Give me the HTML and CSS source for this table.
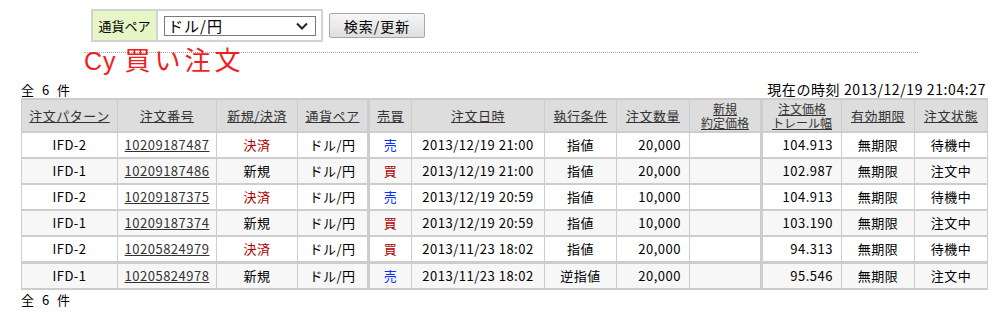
FILE: index.html
```html
<!DOCTYPE html>
<html lang="ja">
<head>
<meta charset="utf-8">
<title>Cy 買い注文</title>
<link rel="stylesheet" href="styles.css">
</head>
<body>
<div class="page">
  <div class="search">
    <div class="pairbox">
      <div class="pairlabel">通貨ペア</div>
      <div class="paircell">
        <div class="select"><span>ドル/円</span>
          <svg class="chev" width="12" height="8" viewBox="0 0 12 8"><path d="M1 1.5 L6 6.5 L11 1.5" fill="none" stroke="#222" stroke-width="2"/></svg>
        </div>
      </div>
    </div>
    <button class="btn" type="button">検索/更新</button>
  </div>
  <div class="rule"></div>
  <h1 class="title">Cy <span class="jp">買い注文</span></h1>
  <div class="info">
    <span class="count">全 6 件</span>
    <span class="now">現在の時刻 2013/12/19 21:04:27</span>
  </div>
  <table class="orders">
    <colgroup>
      <col class="c1"><col class="c2"><col class="c3"><col class="c4"><col class="c5"><col class="c6">
      <col class="c7"><col class="c8"><col class="c9"><col class="c10"><col class="c11"><col class="c12">
    </colgroup>
    <thead>
      <tr>
        <th><a>注文パターン</a></th>
        <th><a>注文番号</a></th>
        <th><a>新規/決済</a></th>
        <th><a>通貨ペア</a></th>
        <th class="sep"><a>売買</a></th>
        <th><a>注文日時</a></th>
        <th><a>執行条件</a></th>
        <th><a>注文数量</a></th>
        <th class="two"><a>新規<br>約定価格</a></th>
        <th class="sep two"><a>注文価格<br>トレール幅</a></th>
        <th><a>有効期限</a></th>
        <th><a>注文状態</a></th>
      </tr>
    </thead>
    <tbody>
      <tr>
        <td>IFD-2</td><td><a>10209187487</a></td><td class="settle">決済</td><td>ドル/円</td><td class="sep sell">売</td>
        <td>2013/12/19 21:00</td><td>指値</td><td class="num">20,000</td><td></td><td class="sep num">104.913</td><td>無期限</td><td>待機中</td>
      </tr>
      <tr class="alt">
        <td>IFD-1</td><td><a>10209187486</a></td><td>新規</td><td>ドル/円</td><td class="sep buy">買</td>
        <td>2013/12/19 21:00</td><td>指値</td><td class="num">20,000</td><td></td><td class="sep num">102.987</td><td>無期限</td><td>注文中</td>
      </tr>
      <tr>
        <td>IFD-2</td><td><a>10209187375</a></td><td class="settle">決済</td><td>ドル/円</td><td class="sep sell">売</td>
        <td>2013/12/19 20:59</td><td>指値</td><td class="num">10,000</td><td></td><td class="sep num">104.913</td><td>無期限</td><td>待機中</td>
      </tr>
      <tr class="alt">
        <td>IFD-1</td><td><a>10209187374</a></td><td>新規</td><td>ドル/円</td><td class="sep buy">買</td>
        <td>2013/12/19 20:59</td><td>指値</td><td class="num">10,000</td><td></td><td class="sep num">103.190</td><td>無期限</td><td>注文中</td>
      </tr>
      <tr>
        <td>IFD-2</td><td><a>10205824979</a></td><td class="settle">決済</td><td>ドル/円</td><td class="sep buy">買</td>
        <td>2013/11/23 18:02</td><td>指値</td><td class="num">20,000</td><td></td><td class="sep num">94.313</td><td>無期限</td><td>待機中</td>
      </tr>
      <tr class="alt group">
        <td>IFD-1</td><td><a>10205824978</a></td><td>新規</td><td>ドル/円</td><td class="sep sell">売</td>
        <td>2013/11/23 18:02</td><td>逆指値</td><td class="num">20,000</td><td></td><td class="sep num">95.546</td><td>無期限</td><td>注文中</td>
      </tr>
    </tbody>
  </table>
  <div class="foot count">全 6 件</div>
</div>
</body>
</html>
```

FILE: styles.css
```css
html, body {
  margin: 0;
  padding: 0;
  background: #ffffff;
}
body {
  font-family: "Noto Sans CJK JP", "Liberation Sans", sans-serif;
  font-size: 13px;
  letter-spacing: 0.5px;
  color: #000;
}
.page {
  width: 967px;
  padding: 9px 0 0 21px;
}
.search {
  display: flex;
  align-items: center;
  margin-left: 70px;
}
.pairbox {
  display: flex;
  border: 2px solid #d2d2d2;
  height: 29px;
}
.pairlabel {
  width: 63px;
  background: #e6f6c6;
  border-right: 2px solid #d2d2d2;
  display: flex;
  align-items: center;
  justify-content: center;
  font-size: 13px;
  line-height: 16px;
  letter-spacing: 0;
}
.paircell {
  width: 163px;
  display: flex;
  align-items: center;
  padding-left: 6px;
  box-sizing: border-box;
}
.select {
  width: 152px;
  height: 20px;
  box-sizing: border-box;
  border: 1px solid #7a7a7a;
  display: flex;
  align-items: center;
  justify-content: space-between;
  padding: 0 7px 0 3px;
  font-size: 15px;
  line-height: 18px;
  letter-spacing: 1px;
}
.chev {
  display: block;
}
.btn {
  margin-left: 6px;
  width: 96px;
  height: 25px;
  box-sizing: border-box;
  border: 1px solid #a8a8a8;
  border-radius: 2px;
  background: linear-gradient(#f6f6f6, #dedede);
  font-family: "Noto Sans CJK JP", sans-serif;
  font-size: 14px;
  letter-spacing: 1px;
  line-height: 18px;
  padding: 0;
  color: #000;
}
.rule {
  margin: 10px 0 0 63px;
  width: 834px;
  border-top: 1px dotted #a8a8a8;
}
.title {
  margin: -6px 0 0 63px;
  height: 24px;
  overflow: visible;
  font-family: "Liberation Sans", "Noto Sans CJK JP", sans-serif;
  font-weight: normal;
  font-size: 25px;
  line-height: 24px;
  letter-spacing: 1px;
  color: #f01e1e;
}
.title .jp {
  font-family: "Noto Sans CJK JP", sans-serif;
  font-size: 26px;
  letter-spacing: 4px;
}
.info {
  display: flex;
  justify-content: space-between;
  align-items: center;
  margin-top: 10px;
  height: 17px;
  line-height: 17px;
  font-size: 13px;
  padding-right: 2px;
}
.now {
  font-size: 14px;
  letter-spacing: 0.6px;
}
.count {
  word-spacing: 4px;
}
.orders {
  width: 967px;
  table-layout: fixed;
  border-collapse: collapse;
}
.c1 { width: 96px; }
.c2 { width: 99px; }
.c3 { width: 81px; }
.c4 { width: 71px; }
.c5 { width: 43px; }
.c6 { width: 133px; }
.c7 { width: 72px; }
.c8 { width: 73px; }
.c9 { width: 72px; }
.c10 { width: 80px; }
.c11 { width: 73px; }
.c12 { width: 73px; }
.orders th, .orders td {
  border: 1px solid #cdcdcd;
  border-top-width: 2px;
  border-bottom-width: 2px;
  padding: 0;
  text-align: center;
  white-space: nowrap;
  font-size: 13px;
}
.orders th {
  background: #dddddd;
  font-weight: normal;
  height: 31px;
  line-height: 13px;
  color: #333;
}
.orders th a, .orders td a {
  color: #333;
  text-decoration: underline;
}
.orders td {
  height: 24px;
  line-height: 16px;
}
.orders .sep {
  border-left-width: 3px;
}
.orders th.two {
  font-size: 12px;
  line-height: 14px;
  letter-spacing: 0;
}
.orders tr.alt td {
  background: #f7f7f7;
}
.orders tr.group td {
  border-top-width: 3px;
}
.orders td.num {
  text-align: right;
  padding-right: 8px;
}
.settle {
  color: #b00000;
}
.buy {
  color: #b00000;
}
.sell {
  color: #0032ff;
}
.foot {
  margin-top: 1px;
  line-height: 17px;
  font-size: 13px;
}
```
